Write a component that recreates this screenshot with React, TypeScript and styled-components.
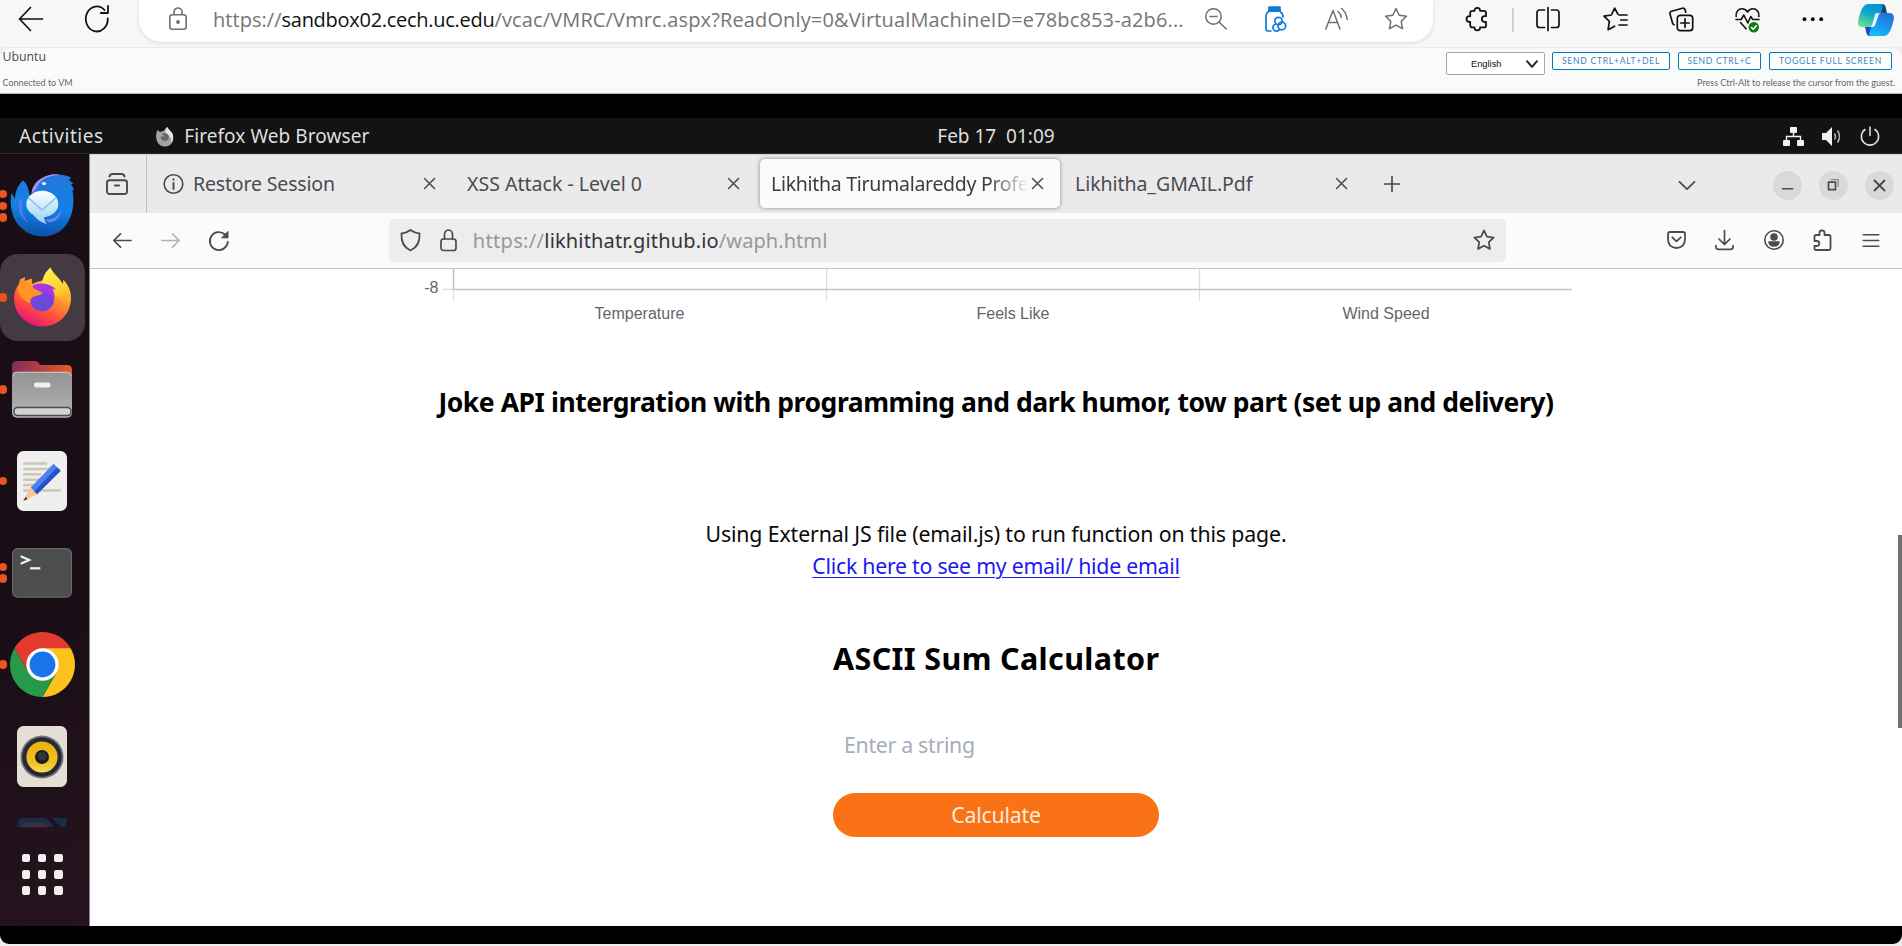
import React from "react";
import styled, { createGlobalStyle, css } from "styled-components";

const ubuntu = `"Noto Sans", "Open Sans", sans-serif`;

const GlobalStyle = createGlobalStyle`
  *, *::before, *::after { box-sizing: border-box; }
  body { margin: 0; overflow: hidden; background: #f0eeee; font-family: ${ubuntu}; }
  h1, h2, p { margin: 0; }
  svg { display: block; flex: none; overflow: visible; }
  button, input, select { font: inherit; }
`;

/* ---------- Host browser ---------- */

const Screen = styled.div`
  width: 1902px;
  height: 946px;
  display: flex;
  flex-direction: column;
  background: #f0eeee;
`;

const EdgeBar = styled.header`
  height: 47px;
  flex: none;
  display: flex;
  background: #f7f7f7;
`;

const Cell = styled.span<{ $w: number }>`
  width: ${(p) => p.$w}px;
  height: 38px;
  flex: none;
  display: flex;
  align-items: center;
  justify-content: center;
`;

const AddressPill = styled.div`
  width: 1294px;
  height: 42px;
  flex: none;
  margin-left: 7px;
  margin-right: 10px;
  padding: 0 7px 0 30px;
  display: flex;
  align-items: center;
  background: #fff;
  border-radius: 0 0 22px 22px;
  box-shadow: 0 1px 4px rgba(0, 0, 0, 0.12);
`;

const PillInner = styled.div`
  display: flex;
  align-items: center;
  flex: 1;
  height: 38px;
  align-self: flex-start;
`;

const EdgeUrl = styled.div`
  margin-left: 26px;
  font: 20px/39px "Open Sans", sans-serif;
  color: #757575;
  white-space: nowrap;
  flex: 1;
`;

const Spaced = styled.span<{ $ls: number; $color?: string }>`
  letter-spacing: ${(p) => p.$ls}px;
  ${(p) => p.$color && css`color: ${p.$color};`}
`;

const EdgeDivider = styled.span`
  width: 2px;
  height: 24px;
  flex: none;
  margin: 8px 0 0 2px;
  background: #cfcfcf;
`;

/* ---------- Remote console strip ---------- */

const ConsoleBar = styled.section`
  height: 47px;
  flex: none;
  display: flex;
  justify-content: space-between;
  background: #fafafa;
  border-top: 1px solid #ebebeb;
  border-bottom: 1px solid #b5b5b5;
  border-radius: 10px 10px 0 0;
  font-family: Lato, sans-serif;
  color: #565656;
`;

const ConsoleStatus = styled.div`
  padding: 1px 0 0 2.5px;
  display: flex;
  flex-direction: column;
  gap: 13px;
`;

const VmName = styled.span`
  font: 12.3px/15px "Open Sans", sans-serif;
  color: #4a4a4a;
`;

const Note = styled.span`
  font-size: 9px;
  line-height: 12px;
  color: #666;
`;

const ConsoleControls = styled.div`
  display: flex;
  flex-direction: column;
  align-items: flex-end;
  padding: 4px 7px 0 0;
`;

const ControlRow = styled.div`
  display: flex;
  align-items: flex-start;
  height: 25px;
  padding-right: 3px;
`;

const LanguageSelect = styled.div`
  width: 99px;
  height: 23px;
  margin-right: 7px;
  padding: 0 6px 0 24px;
  display: flex;
  align-items: center;
  justify-content: space-between;
  background: #fff;
  border: 1px solid #a6a6a6;
  border-radius: 2px;
  font: 9.3px "Liberation Sans", sans-serif;
  color: #111;
`;

const ConsoleButton = styled.button<{ $w: number }>`
  width: ${(p) => p.$w}px;
  height: 18px;
  margin-right: 8px;
  padding: 0;
  border: 1px solid #0079b8;
  border-radius: 2px;
  background: #fff;
  color: #3a86c0;
  font: 8.6px/16px Lato, sans-serif;
  letter-spacing: 0.72px;
  white-space: nowrap;
  &:last-child { margin-right: 0; }
`;

/* ---------- Guest desktop ---------- */

const Guest = styled.main`
  height: 850px;
  flex: none;
  padding: 24px 0 18px;
  background: #000;
  border-radius: 0 0 9px 9px;
  display: flex;
  flex-direction: column;
`;

const TopBar = styled.div`
  height: 36px;
  flex: none;
  display: grid;
  grid-template-columns: 1fr auto 1fr;
  align-items: center;
  padding: 0 22px 0 19px;
  background: #131313;
  border-bottom: 1px solid #2c2c2c;
  color: #dedede;
  font-size: 19px;
  line-height: 35px;
  white-space: pre;
`;

const TopLeft = styled.div`
  display: flex;
  align-items: center;
  padding-top: 1px;
`;

const AppMenu = styled.span`
  display: flex;
  align-items: center;
  gap: 10px;
  margin-left: 51.5px;
`;

const Tray = styled.div`
  display: flex;
  align-items: center;
  justify-content: flex-end;
  gap: 18px;
`;

const Clock = styled.div`
  position: relative;
  left: 46.5px;
`;

const Desktop = styled.div`
  flex: 1;
  display: flex;
  min-height: 0;
`;

const Dock = styled.nav`
  width: 90px;
  flex: none;
  padding-top: 6px;
  background: linear-gradient(150deg, #1a0e16 60%, #27131f);
  border-right: 1px solid #8b8789;
  overflow: hidden;
`;

const DockCell = styled.div`
  position: relative;
  height: 91.75px;
  width: 85px;
  display: flex;
  align-items: center;
`;

const DockTile = styled.div<{ $active?: boolean }>`
  width: 85px;
  height: 87px;
  padding-right: 1px;
  display: flex;
  align-items: center;
  justify-content: center;
  border-radius: 18px;
  background: ${(p) => (p.$active ? "#433b41" : "transparent")};
`;

const Dots = styled.div`
  position: absolute;
  left: -1.5px;
  top: 0;
  bottom: 0;
  display: flex;
  flex-direction: column;
  justify-content: center;
  gap: 3.2px;
`;

const Dot = styled.i`
  width: 8.6px;
  height: 8.6px;
  border-radius: 50%;
  background: #e95420;
`;

const PartialIcon = styled.div`
  height: 26px;
  padding: 16px 0 0 17px;
`;

const AppGrid = styled.div`
  display: grid;
  grid-template-columns: repeat(3, 8.6px);
  grid-auto-rows: 8.6px;
  gap: 7.6px;
  padding: 25.5px 0 0 21.7px;
`;

const GridDot = styled.i`
  border-radius: 2px;
  background: #f0efee;
`;

/* ---------- Guest browser ---------- */

const Browser = styled.div`
  position: relative;
  flex: 1;
  display: flex;
  flex-direction: column;
  background: #fff;
`;

const TabStrip = styled.div`
  height: 59px;
  flex: none;
  display: flex;
  align-items: flex-start;
  background: #eaeaea;
  border-top: 1px solid #d0d0d0;
`;

const StripSlot = styled.div<{ $w: number; $line?: boolean }>`
  width: ${(p) => p.$w}px;
  height: 58px;
  flex: none;
  display: flex;
  align-items: center;
  justify-content: center;
  ${(p) => p.$line && css`padding-right: 2px; border-right: 1px solid #c2c2c2;`}
`;

const TabList = styled.div`
  display: flex;
  gap: 4px;
  padding: 4px 0 0 5px;
`;

const Tab = styled.div<{ $active?: boolean }>`
  width: 300px;
  height: 49px;
  padding: 0 17px 0 11px;
  display: flex;
  align-items: center;
  justify-content: space-between;
  border-radius: 5px;
  color: #4b4b50;
  ${(p) =>
    p.$active &&
    css`
      background: #fbfbfb;
      box-shadow: 0 0 4px rgba(0, 0, 0, 0.42);
      color: #3c3c41;
    `}
`;

const TabTitle = styled.div<{ $ls: number; $fade?: boolean }>`
  display: flex;
  align-items: center;
  gap: 9px;
  width: 256px;
  margin-right: -20px;
  padding-top: 1px;
  overflow: hidden;
  font-size: 19.5px;
  line-height: 30px;
  letter-spacing: ${(p) => p.$ls}px;
  white-space: nowrap;
  ${(p) => p.$fade && css`mask-image: linear-gradient(90deg, #000 218px, transparent 258px);`}
`;

const WindowControls = styled.div`
  display: flex;
  gap: 17px;
  align-items: center;
  height: 60px;
  margin-left: auto;
  padding-right: 8.5px;
`;

const RoundButton = styled.button`
  width: 29px;
  height: 29px;
  padding: 0;
  border: 0;
  border-radius: 50%;
  background: #d9d9d9;
  display: flex;
  align-items: center;
  justify-content: center;
`;

const NavBar = styled.div`
  height: 56px;
  flex: none;
  display: flex;
  align-items: center;
  padding: 0 7px 1px 8px;
  background: #fbfbfb;
  border-bottom: 1px solid #c4c4c4;
`;

const NavSlot = styled.span`
  width: 48.6px;
  height: 40px;
  display: flex;
  align-items: center;
  justify-content: center;
`;

const UrlField = styled.div`
  width: 1117px;
  height: 43px;
  margin-left: 145px;
  margin-right: auto;
  padding: 0 11px;
  display: flex;
  align-items: center;
  background: #ededed;
  border-radius: 5px;
`;

const UrlText = styled.div`
  flex: 1;
  margin-left: 16px;
  padding-top: 2px;
  font-size: 20px;
  line-height: 30px;
  color: #98989c;
  white-space: nowrap;
`;

const IconGap = styled.span`
  width: 19px;
`;

const Page = styled.article`
  flex: 1;
  display: flex;
  flex-direction: column;
  align-items: center;
  color: #0a0a0a;
  white-space: nowrap;
`;

const JokeHeading = styled.h2`
  margin-top: 53px;
  font-size: 26.5px;
  line-height: 40px;
  font-weight: 700;
  letter-spacing: -0.44px;
  color: #000;
`;

const EmailNote = styled.p`
  margin-top: 95px;
  font-size: 21.3px;
  line-height: 33px;
  letter-spacing: -0.13px;
`;

const EmailLink = styled.a`
  margin-top: -1px;
  font-size: 21.3px;
  line-height: 33px;
  letter-spacing: -0.26px;
  color: #1a1af0;
  text-decoration: underline;
  text-decoration-thickness: 1.3px;
  text-underline-offset: 3px;
`;

const Calculator = styled.form`
  width: 326px;
  margin-top: 54px;
  display: flex;
  flex-direction: column;
`;

const CalcHeading = styled.h1`
  font-size: 30.5px;
  line-height: 44px;
  font-weight: 700;
  letter-spacing: 0.36px;
  color: #000;
`;

const CalcInput = styled.input`
  height: 44px;
  margin-top: 42px;
  padding: 0 11px;
  border: 0;
  background: transparent;
  font-size: 21.3px;
  letter-spacing: -0.3px;
  &::placeholder { color: #a6adb9; opacity: 1; }
`;

const CalcButton = styled.button`
  height: 44px;
  margin-top: 27px;
  padding: 0;
  border: 0;
  border-radius: 22px;
  background: #f97316;
  color: #fdebdd;
  font-size: 21.3px;
  line-height: 42px;
  letter-spacing: -0.2px;
`;

const ScrollThumb = styled.div`
  position: absolute;
  right: 0;
  top: 381px;
  width: 4px;
  height: 193px;
  background: #6f6f6f;
`;

/* ---------- Line icons ---------- */

type IconProps = {
  w?: number;
  h?: number;
  box?: string;
  color?: string;
  sw?: number;
  children: React.ReactNode;
};

const Line = ({ w = 24, h = w, box, color = "#111", sw = 1.7, children }: IconProps) => (
  <svg
    width={w}
    height={h}
    viewBox={box ?? `0 0 ${w} ${h}`}
    fill="none"
    stroke={color}
    strokeWidth={sw}
    strokeLinecap="round"
    strokeLinejoin="round"
  >
    {children}
  </svg>
);

const STAR = "M12 1.6l3.2 6.7 7.3 1-5.3 5.1 1.3 7.3L12 18.2l-6.5 3.5 1.3-7.3L1.5 9.3l7.3-1z";

const Cross = ({ size = 11, color = "#4a4a4f", sw = 1.5 }: { size?: number; color?: string; sw?: number }) => (
  <Line w={size} color={color} sw={sw}>
    <path d={`M.5 .5L${size - 0.5} ${size - 0.5}M${size - 0.5} .5L.5 ${size - 0.5}`} />
  </Line>
);

const Copilot = () => (
  <svg width="36" height="32" viewBox="0 -1 36 32">
    <defs>
      <linearGradient id="cpA" x1="0.7" y1="0" x2="0.3" y2="1">
        <stop offset="0" stopColor="#0b8fd6" />
        <stop offset="0.45" stopColor="#10a9c8" />
        <stop offset="1" stopColor="#5fe38a" />
      </linearGradient>
      <linearGradient id="cpB" x1="0.7" y1="0" x2="0.2" y2="1">
        <stop offset="0" stopColor="#2a6fd8" />
        <stop offset="0.5" stopColor="#1b95f2" />
        <stop offset="1" stopColor="#12c2f7" />
      </linearGradient>
    </defs>
    <path d="M21 0h3c2 0 3 1.300 3.600 3L29 9h-5l-5-2z" fill="#0c4d7e" />
    <path d="M15 32h-3c-2 0-3-1.300-3.600-3L7 23h6l4 3z" fill="#1a49dc" />
    <path d="M12 0h10.500c2.300 0 2.700 1.500 1.900 3.700L19 19.500C18 22.500 16 23 13 23H5C0 23-.3 19.500.3 16.500 1.500 10 3.500 5 5.500 2.500 7 .5 9 0 12 0z" fill="url(#cpA)" />
    <path d="M24 32H13.500c-2.300 0-2.700-1.500-1.900-3.700L17 12.500C18 9.500 20 9 23 9h8c5 0 5.300 3.500 4.700 6.500-1.200 6.500-3.200 11.500-5.200 14C29 31.500 27 32 24 32z" fill="url(#cpB)" />
    <path d="M17.500 9.300h4.600c-.9.500-1.300 1.200-1.700 2.400l-3.300 9c-.5 1.400-1.300 2.100-2.600 2.300h-2.200c1-.4 1.500-1.300 1.900-2.400z" fill="#f4fbff" />
  </svg>
);

const Thunderbird = () => (
  <svg width="65" height="63" viewBox="0 0 65 63">
    <defs>
      <linearGradient id="tb" x1="0.5" y1="0" x2="0.4" y2="1">
        <stop offset="0" stopColor="#2377dc" />
        <stop offset="0.55" stopColor="#1280e8" />
        <stop offset="1" stopColor="#0d4fa5" />
      </linearGradient>
      <linearGradient id="tbEnv" x1="0" y1="0" x2="0" y2="1">
        <stop offset="0" stopColor="#fff" />
        <stop offset="1" stopColor="#a9d8f8" />
      </linearGradient>
    </defs>
    <path d="M21.500 22C22 9 33 .5 46 .4 52 .4 57 1.500 61 3.400L59 6l4.500 3.400-2.500.8c1.500 2 2.500 4 3 6.300l-1.500-.5C67 41 55 62.500 33 62.500 13 62.500-3 45 1.500 19L5 25c0-8 3.500-14.500 8-18.500 3.500 3 6 8 6 12.500z" fill="url(#tb)" />
    <path d="M21.500 20C22 8 34 0 47 .3 55 .5 39 1.500 34 5c-5 3-6 7-8 10z" fill="#a78cf0" />
    <path d="M10 25C6 36 12 46 19 49 12 42 10 34 13 25z" fill="#6a78ee" opacity=".75" />
    <path d="M34 45c7 2 14-2 17-9 0 9-8 13-13 12z" fill="#8b86f5" opacity=".8" />
    <ellipse cx="32.300" cy="30" rx="16" ry="13.200" fill="url(#tbEnv)" />
    <path d="M22 39c4 6 8 9 15 11-2-2-3-4-3-8z" fill="#a9d8f8" />
    <path d="M18 23.500L32 36l14.500-12.500" fill="none" stroke="#7fc0ee" strokeWidth="1.600" />
    <ellipse cx="34" cy="9.500" rx="2.200" ry="1.600" fill="#e7f4ff" />
  </svg>
);

const FirefoxLogo = () => (
  <svg width="57" height="59" viewBox="0 0.5 57 59">
    <defs>
      <linearGradient id="ff" x1="0.8" y1="0.05" x2="0.3" y2="1">
        <stop offset="0.1" stopColor="#ffe23f" />
        <stop offset="0.4" stopColor="#ff9a2a" />
        <stop offset="0.72" stopColor="#ff4a3c" />
        <stop offset="1" stopColor="#e3107e" />
      </linearGradient>
      <linearGradient id="ffFlame" x1="0.3" y1="0" x2="0.7" y2="1">
        <stop offset="0" stopColor="#fff04a" />
        <stop offset="0.55" stopColor="#ffcb2e" />
        <stop offset="1" stopColor="#ff8a20" stopOpacity="0" />
      </linearGradient>
      <radialGradient id="ffGlobe" cx="0.55" cy="0.75" r="0.75">
        <stop offset="0" stopColor="#5b52d6" />
        <stop offset="0.6" stopColor="#7a3fe0" />
        <stop offset="1" stopColor="#b533e8" />
      </radialGradient>
    </defs>
    <path d="M5 16l.8-4L11 9.500l-.3 4L17.500 11l.8 5.500C22 14 27 14 30 12c1-4 3-8.500 6.500-12 2 6 8 9 12.500 17l.5-4.500C54 17 57 23 57 30.500 57 47 44 59 28.500 59S0 47 0 31c0-6 2-11 5-15z" fill="url(#ff)" />
    <path d="M28 18c0-8 4-14.500 8.500-18 2 6 8 9 12.500 17l.5-4.500C58 24 57 40 49 48c3-8 0-15-5-18z" fill="url(#ffFlame)" />
    <circle cx="28" cy="31.500" r="12.200" fill="url(#ffGlobe)" />
    <path d="M19 18c6-3 14-3 21 2l2 2.500c-1.500-.8-2.500-.8-3.500-.5 2 3 2.500 6 1.500 9C38 26 28 21 19 24z" fill="#a737e4" />
    <path d="M4 20c4-6 11-5 14 0l11 5.500c-2 2-6 2.500-9 3.500-3.500 1.200-4 4-3.500 7-8-3-13.500-9-12.500-16z" fill="#ff9624" />
  </svg>
);

const Files = () => (
  <svg width="60" height="57" viewBox="0 0 60 57">
    <defs>
      <linearGradient id="flB" x1="0" y1="0" x2="1" y2="0.2">
        <stop offset="0" stopColor="#7d2d5b" />
        <stop offset="0.5" stopColor="#b53f42" />
        <stop offset="1" stopColor="#ec5a24" />
      </linearGradient>
      <linearGradient id="flF" x1="0" y1="0" x2="0" y2="1">
        <stop offset="0" stopColor="#929292" />
        <stop offset="1" stopColor="#b4b4b4" />
      </linearGradient>
    </defs>
    <path d="M0 5q0-5 5-5h18q3 0 5 4h27q5 0 5 5v20H0z" fill="url(#flB)" />
    <rect y="10.800" width="60" height="46" rx="5" fill="url(#flF)" />
    <path d="M1 15q0-3.700 4-3.700h50q4 0 4 3.700" fill="none" stroke="#c9c9c9" />
    <rect x="22" y="21.500" width="16.500" height="5" rx="2.300" fill="#f0f0f0" />
    <rect x="2" y="46.500" width="57" height="8" rx="3.500" fill="#d2d2d2" stroke="#4c4c4c" strokeWidth="1.400" />
  </svg>
);

const Editor = () => (
  <svg width="50" height="60" viewBox="0 0 50 60">
    <rect width="50" height="60" rx="6.500" fill="#efefef" />
    <path d="M6.300 12.500h24M6.300 18h36M6.300 23.300h18M6.300 28.700h18M6.300 34h12M6.300 39.500h37.500" stroke="#cbc7ba" strokeWidth="2.600" />
    <path d="M13.700 36.500L36.600 12.700l3.500 3.500L17 40z" fill="#4f80f0" />
    <path d="M17 40l23-23.800 3.800 3.600L20 43.500z" fill="#2253cc" />
    <path d="M6.300 50l7.400-13.500 6.300 7z" fill="#fdc391" />
    <path d="M6.300 50l2.200-4.200 2.200 2.200z" fill="#444" />
  </svg>
);

const Terminal = () => (
  <svg width="60" height="50" viewBox="0 0 60 50">
    <rect x=".6" y=".6" width="58.800" height="48.500" rx="5" fill="#4d4d4d" stroke="#686868" strokeWidth="1.200" />
    <path d="M8.700 8.200l8.500 3.800-8.500 3.800" fill="none" stroke="#f4f4f4" strokeWidth="2.200" />
    <path d="M18 20.300h10.300" stroke="#f4f4f4" strokeWidth="2.200" />
  </svg>
);

const Chrome = () => (
  <svg width="65" height="65" viewBox="0 0 65 65">
    <path d="M32.500 32.500L4.400 16.200A32.500 32.500 0 0 1 60.600 16.200z" fill="#e33b2e" />
    <path d="M32.500 16.200h28.100A32.500 32.500 0 0 1 32.500 65L46.600 40.600z" fill="#fcc21c" />
    <path d="M4.400 16.200L18.400 40.600 32.500 48.800 46.600 40.600 32.500 65A32.500 32.500 0 0 1 4.400 16.200z" fill="#27994a" />
    <path d="M4.400 16.200L18.400 40.600 32.500 16.200z" fill="#e33b2e" />
    <circle cx="32.500" cy="32.500" r="16.200" fill="#fff" />
    <circle cx="32.500" cy="32.500" r="12.900" fill="#1a73e8" />
  </svg>
);

const Rhythmbox = () => (
  <svg width="50" height="61" viewBox="0 0 50 61">
    <defs>
      <linearGradient id="rb" x1="0" y1="0" x2="0" y2="1">
        <stop offset="0" stopColor="#e8b00e" />
        <stop offset="0.7" stopColor="#f0c224" />
        <stop offset="1" stopColor="#f8dc5c" />
      </linearGradient>
    </defs>
    <rect width="50" height="61" rx="6.500" fill="#e3dfd4" />
    <circle cx="25" cy="31" r="21.500" fill="#72747b" />
    <circle cx="25" cy="31" r="19.800" fill="#262833" />
    <circle cx="25" cy="31" r="15.600" fill="url(#rb)" />
    <circle cx="25" cy="31" r="7" fill="#1b1c1e" />
    <circle cx="25" cy="30" r="4.500" fill="#343434" />
  </svg>
);

const FlameMini = () => (
  <svg width="19" height="20" viewBox="-1 0 18 20">
    <path d="M0 5.500l1.200-2.500 2.200 2C6 4 7 4 8 3.500 8.500 2 9.500.7 11 0c.6 2.500 4 4.300 5.300 7.500 1.500 4.500-.3 12-7.800 12S-1.500 12 0 5.500z" fill="#a4a4a4" />
    <path d="M8.500 4c.5-2 1.500-3.300 2.500-4 .6 2.500 4 4.300 5.300 7.500.8 3 .2 6-1.300 8.500C15.500 11 13 9 10 8z" fill="#e4e4e4" />
    <path d="M5 7q4-2.500 7 1 1.500 5-3 6-4.500 0-5-4l4-1z" fill="#686868" />
  </svg>
);

const DOCK = [
  { icon: <Thunderbird />, dots: 3 },
  { icon: <FirefoxLogo />, dots: 1, active: true },
  { icon: <Files />, dots: 1 },
  { icon: <Editor />, dots: 1 },
  { icon: <Terminal />, dots: 2 },
  { icon: <Chrome />, dots: 1 },
  { icon: <Rhythmbox />, dots: 0 },
];

const FG = "#4a4a4f";

const Chart = () => (
  <svg width="1152" height="60" viewBox="420 269 1152 60" fontFamily='"Liberation Sans", sans-serif' fontSize="16" fill="#666">
    <path d="M443 289.500h10M826.500 269v32M1199.500 269v32M453.500 290v11" stroke="#dedede" strokeWidth="1.300" />
    <path d="M453.500 269v21M453 289.500h1119" stroke="#c2c2c2" strokeWidth="1.500" fill="none" />
    <text x="438.500" y="293" textAnchor="end">-8</text>
    <text x="639.500" y="318.500" textAnchor="middle">Temperature</text>
    <text x="1013" y="318.500" textAnchor="middle">Feels Like</text>
    <text x="1386" y="318.500" textAnchor="middle">Wind Speed</text>
  </svg>
);

export default function App() {
  return (
    <Screen>
      <GlobalStyle />
      <EdgeBar>
        <Cell $w={62}>
          <Line w={24} sw={1.7}><path d="M23.500 12H1M11.500 .5L.5 12l11 11.500" /></Line>
        </Cell>
        <Cell $w={70}>
          <Line w={24} h={28} sw={1.8}><path d="M22.800 13.500A11 12.500 0 1 1 19.500 5M23 .8V8h-7.200" /></Line>
        </Cell>
        <AddressPill>
          <PillInner>
            <Line w={18} h={22} color="#6f6f6f" sw={1.6}>
              <rect x=".8" y="6.800" width="16.400" height="14.500" rx="2.500" />
              <path d="M5 6.500V4a4 4 0 0 1 8 0v2.500" />
              <circle cx="9" cy="14" r="1.100" fill="#6f6f6f" />
            </Line>
            <EdgeUrl>
              <Spaced $ls={0.04}>https://</Spaced>
              <Spaced $ls={-0.28} $color="#111">sandbox02.cech.uc.edu</Spaced>
              <Spaced $ls={0.14}>/vcac/VMRC/Vmrc.aspx?ReadOnly=0&amp;VirtualMachineID=e78bc853-a2b6...</Spaced>
            </EdgeUrl>
            <Cell $w={60}>
              <Line w={22} color="#6f6f6f" sw={1.5}><circle cx="8.500" cy="8.500" r="7.700" /><path d="M5 8.500h7M14 14l7.300 7" /></Line>
            </Cell>
            <Cell $w={60}>
              <Line w={22} h={26} box="0 -1 22 26" color="#0f7ad6" sw={1.7}>
                <path d="M4 0h11v4.200H4z" fill="#0f7ad6" />
                <path d="M3.500 4.500Q1 6.500 1 9v12.500Q1 24 3.500 24H6M15.500 5q2.500 1.500 2.500 5" />
                <circle cx="13.500" cy="14" r="3.700" /><path d="M10.800 17a3.600 3.600 0 1 0 3.700 5.500" /><circle cx="16.800" cy="19" r="3.900" />
              </Line>
            </Cell>
            <Cell $w={60}>
              <Line w={23} h={22} color="#6f6f6f" sw={1.5}>
                <path d="M.8 21L8 2.500 15 21M3.500 14.500h9" />
                <path d="M13 3.500q3 2 3.200 6M16.500 .5q5 4 5.700 11" />
              </Line>
            </Cell>
            <Cell $w={60}><Line color="#6f6f6f" sw={1.5}><path d={STAR} /></Line></Cell>
          </PillInner>
        </AddressPill>
        <Cell $w={67}>
          <Line sw={1.8}>
            <path d="M9.500 3.800a2.800 2.900 0 0 1 5.600 0H19a2 2 0 0 1 2 2v3.400h-1.300a2.900 2.900 0 0 0 0 5.800H21v3.400a2 2 0 0 1-2 2h-3.900a2.800 2.900 0 0 1-5.600 0H7.200a2 2 0 0 1-2-2V15h-.8a2.900 2.900 0 0 1 0-5.800h.8V5.800a2 2 0 0 1 2-2z" />
          </Line>
        </Cell>
        <EdgeDivider />
        <Cell $w={67}>
          <Line><path d="M12 .5v23M8.500 3H3.600A2.600 2.600 0 0 0 1 5.600v12.300a2.600 2.600 0 0 0 2.600 2.600h4.900M15.500 3h4.900A2.600 2.600 0 0 1 23 5.600v12.300a2.600 2.600 0 0 1-2.600 2.600h-4.900" /></Line>
        </Cell>
        <Cell $w={67}>
          <Line><path d="M14.800 7L11.700 1.200 8.400 8 1 9.200l5.400 5.200-1.300 8.300 6.500-3.500M16 8h8M17.800 13H24M16 18h8" /></Line>
        </Cell>
        <Cell $w={66}>
          <Line>
            <rect x="8.300" y="8.300" width="15.400" height="15.400" rx="3" /><path d="M16 11.800v8.400M11.800 16h8.400" />
            <path d="M16.700 5.200l-.6-2.300a2.200 2.200 0 0 0-2.700-1.600L2.600 4.200A2.200 2.200 0 0 0 1 6.900l2.600 9.400a2.200 2.200 0 0 0 1.500 1.500" />
          </Line>
        </Cell>
        <Cell $w={66}>
          <Line w={25} sw={1.6}>
            <path d="M1.200 9.500C.3 5 3.500 1.800 7 1.800c2.500 0 4.500 1.400 5.500 3.200 1-1.800 3-3.200 5.500-3.200 3.500 0 6.700 3.200 5.800 7.700" />
            <path d="M1 12.500h5.200l2.600-4.500 4 8 3-6.500 2 3H24M5.500 15.500l5.500 6.300" />
            <circle cx="18.800" cy="20.300" r="5.200" fill="#107c10" stroke="none" /><path d="M16.500 20.500l1.700 1.700 3-3.300" stroke="#fff" />
          </Line>
        </Cell>
        <Cell $w={66}>
          <svg width="22" height="4" viewBox="0 0 22 4"><circle cx="2.500" cy="2.200" r="1.900" /><circle cx="10.800" cy="2.200" r="1.900" /><circle cx="19.200" cy="2.200" r="1.900" /></svg>
        </Cell>
        <Cell $w={60}><Copilot /></Cell>
      </EdgeBar>

      <ConsoleBar>
        <ConsoleStatus>
          <VmName>Ubuntu</VmName>
          <Note>Connected to VM</Note>
        </ConsoleStatus>
        <ConsoleControls>
          <ControlRow>
            <LanguageSelect>
              English
              <Line w={12} h={8} color="#222" sw={2}><path d="M1 1.200l5 5.600 5-5.600" /></Line>
            </LanguageSelect>
            <ConsoleButton $w={118}>SEND CTRL+ALT+DEL</ConsoleButton>
            <ConsoleButton $w={83}>SEND CTRL+C</ConsoleButton>
            <ConsoleButton $w={123}>TOGGLE FULL SCREEN</ConsoleButton>
          </ControlRow>
          <Note>Press Ctrl-Alt to release the cursor from the guest.</Note>
        </ConsoleControls>
      </ConsoleBar>

      <Guest>
        <TopBar>
          <TopLeft>
            <Spaced $ls={0.56}>Activities</Spaced>
            <AppMenu><FlameMini /><Spaced $ls={0.07}>Firefox Web Browser</Spaced></AppMenu>
          </TopLeft>
          <Clock>Feb 17  01:09</Clock>
          <Tray>
            <svg width="21" height="19" viewBox="0 0 21 19" fill="#f2f2f2">
              <rect x="7" width="7" height="6" rx="1" /><rect y="13" width="7" height="6" rx="1" /><rect x="14" y="13" width="7" height="6" rx="1" />
              <path d="M10.500 6v4M3.500 13v-3.500h14V13" fill="none" stroke="#f2f2f2" strokeWidth="1.400" />
            </svg>
            <svg width="20" height="19" viewBox="0 0 20 19">
              <path d="M0 6h4l6-6v19l-6-6H0z" fill="#f2f2f2" />
              <path d="M12.500 6.500q2 3 0 6M15.500 3.500q4 6 0 12" fill="none" stroke="#bdbdbd" strokeWidth="1.500" />
            </svg>
            <Line w={20} h={19} color="#dcdcdc" sw={1.6}><path d="M5 2.500a8.600 8.600 0 1 0 10 0M10 0v8.500" /></Line>
          </Tray>
        </TopBar>
        <Desktop>
          <Dock>
            {DOCK.map((d, i) => (
              <DockCell key={i}>
                <DockTile $active={d.active}>{d.icon}</DockTile>
                <Dots>{Array.from({ length: d.dots }, (_, k) => <Dot key={k} />)}</Dots>
              </DockCell>
            ))}
            <PartialIcon>
              <svg width="50" height="10" viewBox="0 0 50 10">
                <path d="M0 9Q0 0 6 0h22q3 0 9 9z" fill="#192c45" />
                <path d="M4 9.500q0-5 4-5h18q3 0 5 5z" fill="#3d2f3a" />
                <path d="M35 0h14.500v9H44z" fill="#192c45" />
              </svg>
            </PartialIcon>
            <AppGrid>{Array.from({ length: 9 }, (_, k) => <GridDot key={k} />)}</AppGrid>
          </Dock>

          <Browser>
            <TabStrip>
              <StripSlot $w={57} $line>
                <Line w={22} color={FG} sw={1.9}>
                  <rect x="1" y="7.300" width="20" height="13.700" rx="2.500" /><path d="M3.500 3.500Q4 1 6.500 1h9q2.500 0 3 2.500M8.800 12.500h4.400" />
                </Line>
              </StripSlot>
              <TabList>
                <Tab>
                  <TabTitle $ls={-0.16}>
                    <Line w={21} color={FG} sw={1.6}><circle cx="10.500" cy="10" r="9.300" /><path d="M10.500 9v6M10.500 5.300v.4" strokeWidth="1.900" /></Line>
                    Restore Session
                  </TabTitle>
                  <Cross />
                </Tab>
                <Tab><TabTitle $ls={0.02}>XSS Attack - Level 0</TabTitle><Cross /></Tab>
                <Tab $active><TabTitle $ls={-0.29} $fade>Likhitha Tirumalareddy Profe</TabTitle><Cross /></Tab>
                <Tab><TabTitle $ls={-0.05}>Likhitha_GMAIL.Pdf</TabTitle><Cross /></Tab>
              </TabList>
              <StripSlot $w={56}>
                <Line w={16} color={FG} sw={1.7}><path d="M8 .5v15M.5 8h15" /></Line>
              </StripSlot>
              <WindowControls>
                <StripSlot $w={16}>
                  <Line w={16} h={9} color={FG} sw={1.8}><path d="M.5 .8L8 8.200 15.500 .8" /></Line>
                </StripSlot>
                <StripSlot $w={43.500} />
                <RoundButton><Line w={11} h={11} color={FG} sw={1.6}><path d="M.5 8.700h10" /></Line></RoundButton>
                <RoundButton>
                  <Line w={12} h={12} color={FG} sw={1.7}>
                    <rect x="1.500" y="3.200" width="7" height="7.500" /><path d="M4 .6h7.200v7" stroke="#88888b" strokeWidth="1.300" />
                  </Line>
                </RoundButton>
                <RoundButton><Cross size={11} sw={1.9} /></RoundButton>
              </WindowControls>
            </TabStrip>

            <NavBar>
              <NavSlot><Line w={18} h={15} color={FG}><path d="M18 7.500H.8M7.500 .8L.8 7.500l6.700 6.700" /></Line></NavSlot>
              <NavSlot><Line w={18} h={15} color="#b3b3b6"><path d="M0 7.500h17.200M10.500 .8l6.700 6.700-6.700 6.700" /></Line></NavSlot>
              <NavSlot>
                <Line w={20} h={18} color={FG} sw={1.8}><path d="M18.800 11A9 9 0 1 1 16 3.500" /><path d="M19 .8v6h-6z" fill={FG} strokeWidth="1" /></Line>
              </NavSlot>
              <UrlField>
                <Line w={21} h={22} color={FG} sw={1.8}><path d="M10.500 1q4 3 9 3.500C20 12 17 18.500 10.500 21.500 4 18.500 1 12 1.500 4.500 6.500 4 10.500 1 10.500 1z" /></Line>
                <IconGap />
                <Line w={17} h={22} color={FG} sw={1.7}><rect x="1" y="10" width="15" height="11.500" rx="2.500" /><path d="M4.500 10V5.300a4 4.300 0 0 1 8 0V10" /></Line>
                <UrlText>
                  <Spaced $ls={0.33}>https://</Spaced>
                  <Spaced $ls={0.16} $color="#333338">likhithatr.github.io</Spaced>
                  <Spaced $ls={0.07}>/waph.html</Spaced>
                </UrlText>
                <Line w={22} box="0 0 24 24" color={FG} sw={1.9}><path d={STAR} /></Line>
              </UrlField>
              <NavSlot>
                <Line w={19} h={18} color={FG} sw={1.8}><path d="M3 1h13q2 0 2 2v5q0 8.500-8.500 9Q1 16.500 1 8V3q0-2 2-2zM5.300 6.300l4.200 4 4.200-4" /></Line>
              </NavSlot>
              <NavSlot>
                <Line w={19} h={20} color={FG} sw={1.7}><path d="M9.500 .5v14M4 9l5.500 5.500L15 9M1 15.500v1.500q0 2.300 2.300 2.300h12.400q2.300 0 2.300-2.300v-1.500" /></Line>
              </NavSlot>
              <NavSlot>
                <Line w={20} h={20} color={FG} sw={1.6}>
                  <circle cx="10" cy="10" r="9.200" /><circle cx="10" cy="7" r="3" fill={FG} /><path d="M5 12h10q-.5 4-5 4t-5-4z" fill={FG} />
                </Line>
              </NavSlot>
              <NavSlot>
                <Line w={19} h={22} color={FG} sw={1.8}>
                  <path d="M6.500 6V3.800a2.500 2.500 0 0 1 5 0V6H16q1.500 0 1.500 1.500v12Q17.500 21 16 21H3q-1.500 0-1.500-1.500V17h2.300a2.500 2.500 0 0 0 0-5H1.500V7.500Q1.500 6 3 6z" />
                </Line>
              </NavSlot>
              <NavSlot>
                <Line w={16} h={13} color={FG} sw={1.6}><path d="M.3 .8h15.400M.3 6.500h15.400M.3 12.200h15.400" /></Line>
              </NavSlot>
            </NavBar>

            <Page>
              <Chart />
              <JokeHeading>Joke API intergration with programming and dark humor, tow part (set up and delivery)</JokeHeading>
              <EmailNote>Using External JS file (email.js) to run function on this page.</EmailNote>
              <EmailLink>Click here to see my email/ hide email</EmailLink>
              <Calculator>
                <CalcHeading>ASCII Sum Calculator</CalcHeading>
                <CalcInput placeholder="Enter a string" />
                <CalcButton type="button">Calculate</CalcButton>
              </Calculator>
            </Page>
            <ScrollThumb />
          </Browser>
        </Desktop>
      </Guest>
    </Screen>
  );
}
